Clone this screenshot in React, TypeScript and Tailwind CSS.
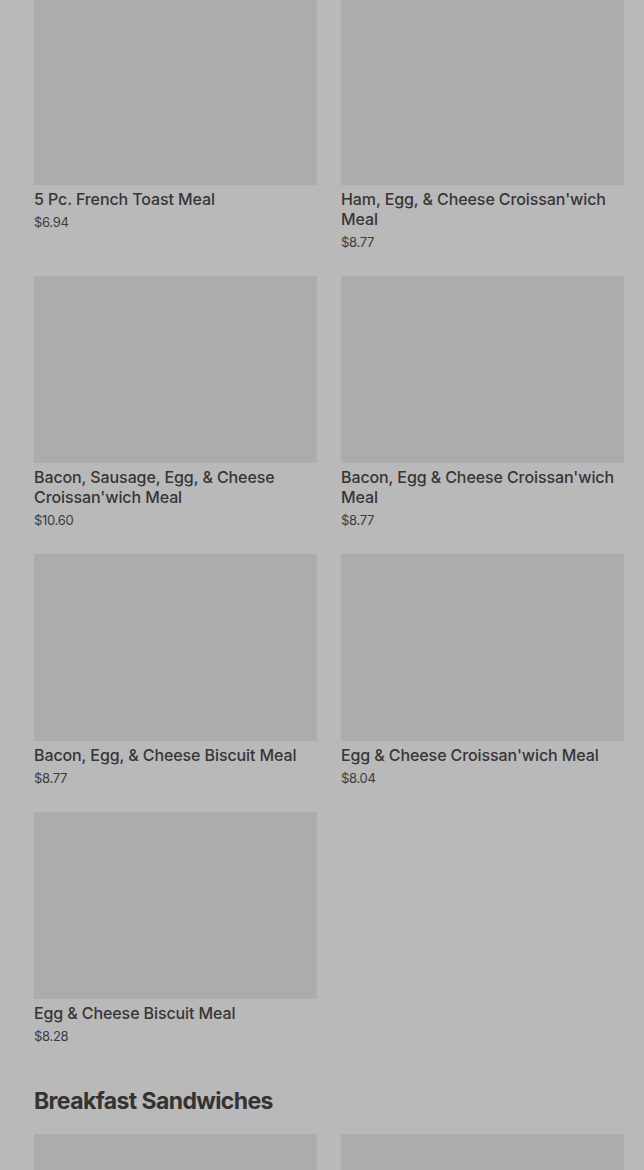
const meals = [
  { name: "5 Pc. French Toast Meal", price: "$6.94" },
  { name: "Ham, Egg, & Cheese Croissan'wich Meal", price: "$8.77" },
  { name: "Bacon, Sausage, Egg, & Cheese Croissan'wich Meal", price: "$10.60" },
  { name: "Bacon, Egg & Cheese Croissan'wich Meal", price: "$8.77" },
  { name: "Bacon, Egg, & Cheese Biscuit Meal", price: "$8.77" },
  { name: "Egg & Cheese Croissan'wich Meal", price: "$8.04" },
  { name: "Egg & Cheese Biscuit Meal", price: "$8.28" },
];

function MenuCard({ name, price }: { name: string; price: string }) {
  return (
    <div className="flex flex-col">
      <div className="h-[187px] w-full bg-[#acacac]" />
      <p className="mt-1 text-[16px] leading-5 font-medium tracking-[-0.1px] text-[#363636]">{name}</p>
      <p className="mt-[3px] text-[13px] leading-5 text-[#3c3c3c] tracking-[-0.3px]">{price}</p>
    </div>
  );
}

export default function App() {
  return (
    <div
      className="h-[1170px] overflow-hidden bg-[#b9b9b9] pl-[34px] pr-[20px]"
      style={{ fontFamily: "Inter, 'Noto Sans', sans-serif" }}
    >
      <div className="-mt-[2px] grid grid-cols-2 gap-x-6 gap-y-6">
        {meals.map((m) => (
          <MenuCard key={m.name} name={m.name} price={m.price} />
        ))}
      </div>

      {/* Breakfast Sandwiches */}
      <h2 className="mt-[39px] mb-[17px] text-[23px] leading-8 font-bold tracking-[-0.6px] text-[#333333]">
        Breakfast Sandwiches
      </h2>
      <div className="grid grid-cols-2 gap-x-6">
        <div className="h-[187px] bg-[#acacac]" />
        <div className="h-[187px] bg-[#acacac]" />
      </div>
    </div>
  );
}
